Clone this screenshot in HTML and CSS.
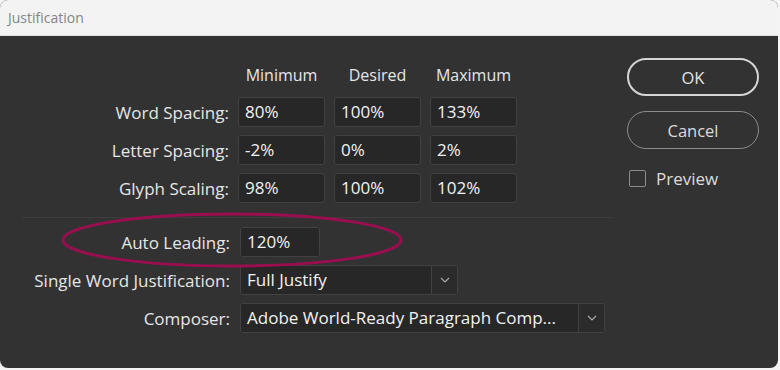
FILE: index.html
```html
<!DOCTYPE html>
<html lang="en">
<head>
  <meta charset="UTF-8" />
  <title>Justification</title>
  <link rel="stylesheet" href="styles.css">
</head>
<body>
  <div class="window">
    <div class="titlebar">Justification</div>
    <div class="dialog">
      <div class="form">
        <div class="spacing-grid">
          <span></span>
          <span class="col-head">Minimum</span>
          <span class="col-head">Desired</span>
          <span class="col-head">Maximum</span>

          <label>Word Spacing:</label>
          <div class="field">80%</div>
          <div class="field">100%</div>
          <div class="field">133%</div>

          <label>Letter Spacing:</label>
          <div class="field">-2%</div>
          <div class="field">0%</div>
          <div class="field">2%</div>

          <label>Glyph Scaling:</label>
          <div class="field">98%</div>
          <div class="field">100%</div>
          <div class="field">102%</div>
        </div>

        <div class="divider"></div>

        <div class="options-grid">
          <label>Auto Leading:</label>
          <div class="field leading">120%</div>

          <label>Single Word Justification:</label>
          <div class="select word-select">
            <span class="select-value">Full Justify</span>
            <span class="select-btn"><svg width="10" height="6" viewBox="0 0 10 6"><path d="M1 1 L5 5 L9 1" fill="none" stroke="#a9a9a9" stroke-width="1.2"/></svg></span>
          </div>

          <label>Composer:</label>
          <div class="select composer-select">
            <span class="select-value">Adobe World-Ready Paragraph Comp...</span>
            <span class="select-btn"><svg width="10" height="6" viewBox="0 0 10 6"><path d="M1 1 L5 5 L9 1" fill="none" stroke="#a9a9a9" stroke-width="1.2"/></svg></span>
          </div>
        </div>
      </div>

      <div class="actions">
        <button class="btn btn-default">OK</button>
        <button class="btn">Cancel</button>
        <div class="check"><span class="box"></span>Preview</div>
      </div>
    </div>

    <svg class="highlight" width="345" height="58" viewBox="0 0 345 58">
      <ellipse cx="172" cy="28" rx="169" ry="26" fill="none" stroke="#9a0e51" stroke-width="3"/>
    </svg>
  </div>
</body>
</html>
```

FILE: styles.css
```css
body {
  margin: 0;
  background: #f4f4f4;
  font-family: "Open Sans", "Noto Sans", sans-serif;
}
.window {
  position: relative;
  width: 778px;
  height: 368px;
  background: #323232;
  border-radius: 8px;
  overflow: hidden;
}
.titlebar {
  height: 36px;
  line-height: 36px;
  padding-left: 8px;
  background: #f3f3f3;
  border-bottom: 1px solid #e2e2e2;
  box-sizing: border-box;
  color: #858585;
  font-size: 14px;
}
.dialog {
  display: flex;
  padding-left: 22px;
}
.form {
  width: 590px;
}
.spacing-grid {
  display: grid;
  grid-template-columns: 208px 87px 87px 87px;
  grid-template-rows: 26px 30px 30px 30px;
  column-gap: 9px;
  row-gap: 8px;
  margin-top: 27px;
  margin-left: -1px;
}
.col-head {
  text-align: center;
  color: #e6e6e6;
  font-size: 16px;
  line-height: 24px;
}
label {
  color: #e6e6e6;
  font-size: 17px;
  text-align: right;
  align-self: center;
}
.field {
  box-sizing: border-box;
  height: 30px;
  line-height: 28px;
  padding-left: 6px;
  background: #272727;
  border: 1px solid #414141;
  border-radius: 3px;
  color: #f2f2f2;
  font-size: 17px;
}
.divider {
  height: 1px;
  background: #3d3d3d;
  margin-top: 14px;
}
.options-grid {
  display: grid;
  grid-template-columns: 208px auto;
  grid-auto-rows: 30px;
  column-gap: 10px;
  row-gap: 8px;
  justify-items: start;
  margin-top: 9px;
}
.options-grid label {
  justify-self: end;
}
.leading {
  width: 80px;
}
.select {
  box-sizing: border-box;
  display: flex;
  height: 30px;
  background: #272727;
  border: 1px solid #414141;
  border-radius: 3px;
  color: #f2f2f2;
  font-size: 17px;
}
.word-select {
  width: 218px;
}
.composer-select {
  width: 365px;
}
.select-value {
  flex: 1;
  line-height: 28px;
  padding-left: 6px;
  white-space: nowrap;
  overflow: hidden;
}
.select-btn {
  width: 25px;
  display: flex;
  align-items: center;
  justify-content: center;
  border-left: 1px solid #414141;
  background: #2b2b2b;
}
.actions {
  display: flex;
  flex-direction: column;
  width: 132px;
  margin-left: 15px;
  padding-top: 22px;
}
.btn {
  box-sizing: border-box;
  height: 38px;
  border-radius: 19px;
  background: transparent;
  border: 1px solid #8c8c8c;
  color: #dcdcdc;
  font-family: inherit;
  font-size: 16.5px;
  margin-bottom: 15px;
}
.btn-default {
  border: 2px solid #d6d6d6;
  color: #e4e4e4;
}
.check {
  display: flex;
  align-items: center;
  margin-top: 3px;
  margin-left: 2px;
  color: #dcdcdc;
  font-size: 17px;
}
.box {
  box-sizing: border-box;
  width: 17px;
  height: 17px;
  border: 1px solid #8c8c8c;
  border-radius: 2px;
  margin-right: 10px;
}
.highlight {
  position: absolute;
  left: 60px;
  top: 212px;
}
```
